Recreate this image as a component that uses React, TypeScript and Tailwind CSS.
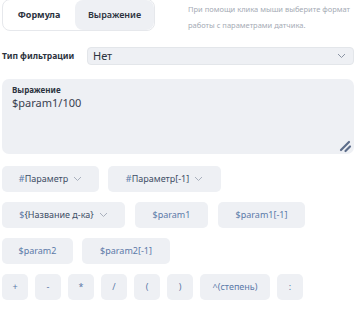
import React from 'react'

function Chevron() {
  return (
    <svg width="9" height="6" viewBox="0 0 9 6" className="ml-[5px]">
      <path d="M1 1l3.5 3.5L8 1" fill="none" stroke="#a9b0bd" strokeWidth="1" />
    </svg>
  )
}

function Chip({ children, w, arrow, dark }: { children: React.ReactNode; w: string; arrow?: boolean; dark?: boolean }) {
  return (
    <div className={`${w} h-[26px] rounded-[5px] bg-[#eef0f4] flex items-center justify-center text-[9px] ${dark ? 'text-[#3e4e66]' : 'text-[#5b79a8]'}`}>
      {children}
      {arrow && <Chevron />}
    </div>
  )
}

export default function App() {
  return (
    <div className="w-[364px] h-[314px] bg-white overflow-hidden pl-[2px] pr-[10px]" style={{ fontFamily: '"Noto Sans", sans-serif' }}>
      <div className="flex items-start">
        <div className="w-[153px] h-[32px] -mt-[1px] border border-[#e6e8ec] rounded-[8px] flex overflow-hidden">
          <div className="w-[72px] flex items-center justify-center text-[9px] font-bold text-[#2c3340]">Формула</div>
          <div className="flex-1 bg-[#eef0f4] rounded-[8px] flex items-center justify-center text-[9px] font-semibold text-[#2c3340]">Выражение</div>
        </div>
        <div className="ml-[33px] mt-[1px] text-[7.5px] leading-[16px] text-[#a5abb5]">
          При помощи клика мыши выберите формат<br />работы с параметрами датчика.
        </div>
      </div>

      <div className="flex items-center mt-[14px]">
        <div className="w-[85px] text-[8.5px] font-bold text-[#2c3340]">Тип фильтрации</div>
        <div className="flex-1 h-[18px] bg-[#eef0f4] border border-[#e3e6ea] rounded-[4px] flex items-center justify-between pl-[5px] pr-[7px]">
          <span className="text-[11px] text-[#2c3340]">Нет</span>
          <svg width="9" height="6" viewBox="0 0 9 6">
            <path d="M1 1l3.5 3.5L8 1" fill="none" stroke="#8a93a3" strokeWidth="1" />
          </svg>
        </div>
      </div>

      <div className="mt-[14px] h-[75px] bg-[#eef0f4] rounded-[7px] pl-[10px] pt-[6px] relative">
        <div className="text-[8px] font-bold text-[#2c3340] leading-[10px]">Выражение</div>
        <div className="text-[11px] text-[#3a4150] leading-[15px]">$param1/100</div>
        <svg width="14" height="14" viewBox="0 0 14 14" className="absolute right-[1px] bottom-[1px]">
          <path d="M2 11L10 3M6.5 12L11 7.5" stroke="#5d6d8a" strokeWidth="2.2" strokeLinecap="round" />
        </svg>
      </div>

      <div className="mt-[12px] flex flex-col gap-[10px]">
        <div className="flex gap-[9px]">
          <Chip w="w-[97px]" arrow><span className="text-[#5b79a8]">#</span><span className="text-[#3e4e66]">Параметр</span></Chip>
          <Chip w="w-[113px]" arrow><span className="text-[#5b79a8]">#</span><span className="text-[#3e4e66]">Параметр[-1]</span></Chip>
        </div>
        <div className="flex gap-[10px]">
          <Chip w="w-[123px]" arrow><span className="text-[#5b79a8]">$</span><span className="text-[#3e4e66]">{'{Название д-ка}'}</span></Chip>
          <Chip w="w-[73px]">$param1</Chip>
          <Chip w="w-[87px]">$param1[-1]</Chip>
        </div>
        <div className="flex gap-[9px]">
          <Chip w="w-[71px]">$param2</Chip>
          <Chip w="w-[88px]">$param2[-1]</Chip>
        </div>
        <div className="flex gap-[7px]">
          <Chip w="w-[26px]">+</Chip>
          <Chip w="w-[26px]">-</Chip>
          <Chip w="w-[26px]">*</Chip>
          <Chip w="w-[26px]">/</Chip>
          <Chip w="w-[26px]">(</Chip>
          <Chip w="w-[26px]">)</Chip>
          <Chip w="w-[70px]">^(степень)</Chip>
          <Chip w="w-[26px]">:</Chip>
        </div>
      </div>
    </div>
  )
}
